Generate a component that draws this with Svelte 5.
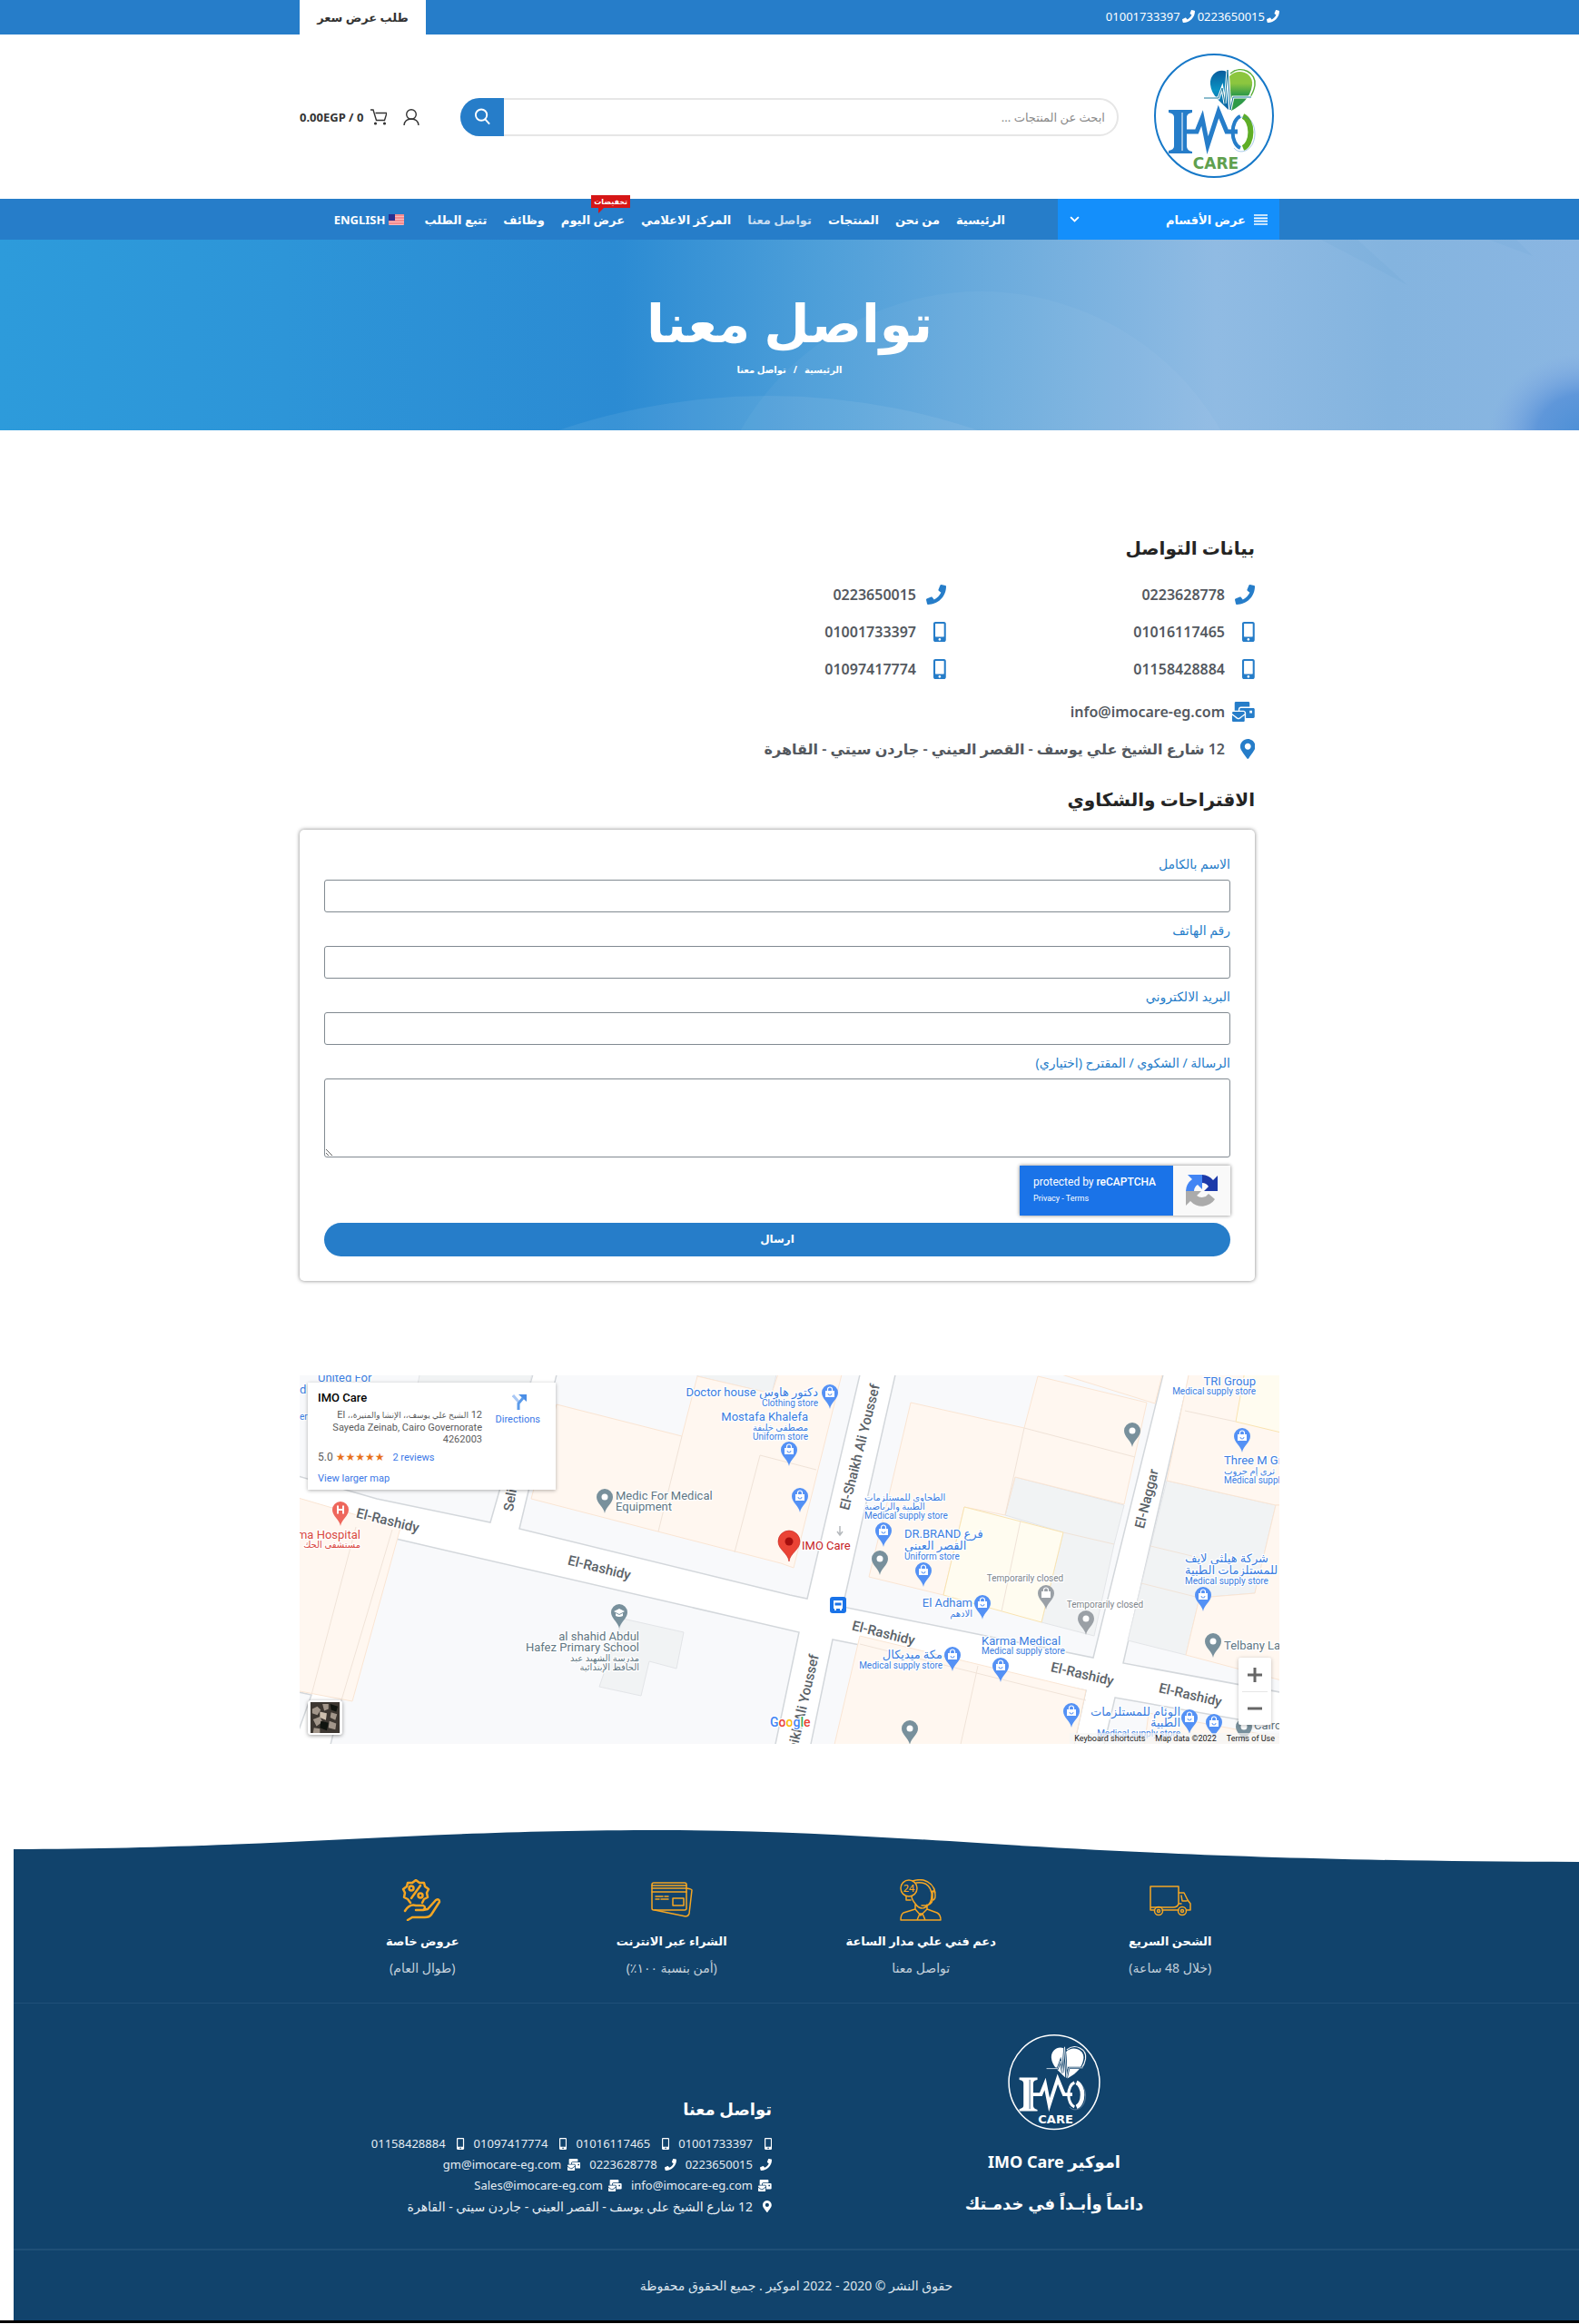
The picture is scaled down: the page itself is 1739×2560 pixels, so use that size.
<script>
  const paths = {
    phone: { w: 512, d: 'M493.4 24.6l-104-24c-11.3-2.6-22.9 3.3-27.5 13.9l-48 112c-4.2 9.8-1.4 21.3 6.9 28l60.6 49.6c-36 76.7-98.9 140.5-177.2 177.2l-49.6-60.6c-6.8-8.3-18.2-11.1-28-6.9l-112 48C3.9 366.5-2 378.1.6 389.4l24 104C27.1 504.2 36.7 512 48 512c256.1 0 464-207.5 464-464 0-11.2-7.7-20.9-18.6-23.4z' },
    mobile: { w: 320, d: 'M272 0H48C21.5 0 0 21.5 0 48v416c0 26.5 21.5 48 48 48h224c26.5 0 48-21.5 48-48V48c0-26.5-21.5-48-48-48zM160 480c-17.7 0-32-14.3-32-32s14.3-32 32-32 32 14.3 32 32-14.3 32-32 32zm112-108c0 6.6-5.4 12-12 12H60c-6.6 0-12-5.4-12-12V60c0-6.6 5.4-12 12-12h200c6.6 0 12 5.4 12 12v312z' },
    pin: { w: 384, d: 'M172.268 501.67C26.97 291.031 0 269.413 0 192 0 85.961 85.961 0 192 0s192 85.961 192 192c0 77.413-26.97 99.031-172.268 309.67-9.535 13.774-29.93 13.773-39.464 0zM192 272c44.183 0 80-35.817 80-80s-35.817-80-80-80-80 35.817-80 80 35.817 80 80 80z' },
    mail: { w: 576, d: 'M160 448c-25.6 0-51.2-22.4-64-32-64-44.8-83.2-60.8-96-70.4V480c0 17.67 14.33 32 32 32h256c17.67 0 32-14.33 32-32V345.6c-12.8 9.6-32 25.6-96 70.4-12.8 9.6-38.4 32-64 32zm128-192H32c-17.67 0-32 14.33-32 32v16c25.6 19.2 22.4 19.2 115.2 86.4 9.6 6.4 28.8 25.6 44.8 25.6s35.2-19.2 44.8-22.4c92.8-67.2 89.6-67.2 115.2-86.4V288c0-17.67-14.33-32-32-32zm256-96H224c-17.67 0-32 14.33-32 32v32h96c33.21 0 60.59 25.42 63.71 57.82l.29-.22V416h192c17.67 0 32-14.33 32-32V192c0-17.67-14.33-32-32-32zm-32 128h-64v-64h64v64zm-352-96c0-35.29 28.71-64 64-64h224V32c0-17.67-14.33-32-32-32H96C78.33 0 64 14.33 64 32v192h96v-32z' }
  };

  const nav = [
    { label: 'الرئيسية' },
    { label: 'من نحن' },
    { label: 'المنتجات' },
    { label: 'تواصل معنا', current: true },
    { label: 'المركز الاعلامي' },
    { label: 'عرض اليوم', badge: 'تخفيضات' },
    { label: 'وظائف' },
    { label: 'تتبع الطلب' }
  ];

  const contacts = [
    ['phone', '0223628778'], ['phone', '0223650015'],
    ['mobile', '01016117465'], ['mobile', '01001733397'],
    ['mobile', '01158428884'], ['mobile', '01097417774']
  ];
  const address = '12 شارع الشيخ علي يوسف - القصر العيني - جاردن سيتي - القاهرة';

  const footerRows = [
    [['mobile', '01001733397'], ['mobile', '01016117465'], ['mobile', '01097417774'], ['mobile', '01158428884']],
    [['phone', '0223650015'], ['phone', '0223628778'], ['mail', 'gm@imocare-eg.com']],
    [['mail', 'info@imocare-eg.com'], ['mail', 'Sales@imocare-eg.com']],
    [['pin', address]]
  ];

  const features = [
    { icon: 'truck', title: 'الشحن السريع', sub: '(خلال 48 ساعة)' },
    { icon: 'support', title: 'دعم فني علي مدار الساعة', sub: 'تواصل معنا' },
    { icon: 'cards', title: 'الشراء عبر الانترنت', sub: '(أمن بنسبة ١٠٠٪)' },
    { icon: 'offer', title: 'عروض خاصة', sub: '(طوال العام)' }
  ];

  const fields = [
    { id: 'name', label: 'الاسم بالكامل', type: 'text' },
    { id: 'phone', label: 'رقم الهاتف', type: 'tel' },
    { id: 'email', label: 'البريد الالكتروني', type: 'email' }
  ];

  const blocks = [
    '-5,-5 258,-5 210,162 85,136 -5,110',
    '284,-5 618,-5 559,246 540,242 242,169',
    '93,177 550,283 523,411 33,411 46,358',
    '-5,348 13,352 -5,402',
    '657,-5 952,-5 874,311 598,255',
    '981,-5 1085,-5 1085,350 907,317',
    '587,291 866,347 852,411 562,411',
    '898,355 1085,388 1085,411 885,411'
  ];
  const greys = [
    '438,-5 438,1 520,20 526,-5', '133,-5 257,-5 240,60 120,60',
    '788,112 908,143 897,186 875,287 817,272 841,173 777,154',
    '955,116 1075,143 1052,240 991,245 976,308 912,292',
    '356,268 423,283 415,323 385,315 376,353 330,343'
  ];
  const shops = [
    '283,32 421,67 438,1 520,20 528,-5 598,-5 544,212 530,207 255,136',
    '673,30 798,58 813,1 933,30 908,142 788,112 777,154 732,145 709,242 627,222 650,128',
    '839,-1 942,31 951,-5',
    '980,-5 1085,-5 1085,143 1075,143 955,116',
    '1075,143 1085,143 1085,337 976,308 991,245 1052,240',
    '617,287 866,347 852,411 588,411',
    '935,372 1085,400 1085,411 930,411',
    '-5,134 111,168 58,359 -5,347'
  ];
  const yellows = ['732,145 841,173 817,272 709,242', '1041,-5 1085,-5 1085,64 1031,51'];
  const seams = 'M421 67L395 172M507 88L479 195M507 88L569 104M798 58L777 154M798 58L920 90M794 160L773 260M747 320L727 411M62 167L13 352M102 170L46 358M975 39L1031 51M937 188L995 202M927 229L991 245M841 173L897 186M617 296L866 358';

  const bagPins = [[539, 82], [584, 19], [551, 133], [643, 171], [687, 215], [752, 251], [1038, 67], [995, 242], [719, 308], [772, 320], [850, 370], [980, 377], [1007, 382]];
  const dotPins = [[336, 134, '#78909c'], [639, 202, '#78909c'], [866, 268, '#9aa0a6'], [917, 61, '#78909c'], [1006, 293, '#78909c'], [672, 389, '#78909c'], [1040, 387, '#78909c']];

  // x, y, text, size, colour, anchor
  const labels = [
    [20, 7, 'United For', 13, 'blue', 'start'],
    [0, 20, 'd', 13, 'blue', 'start'],
    [0, 49, 'er', 10, 'blue', 'start'],
    [67, 180, 'ma Hospital', 13, 'red', 'end'],
    [67, 190, 'مستشفى الحك', 10, 'red', 'end'],
    [348, 137, 'Medic For Medical', 13, 'slate', 'start'],
    [348, 149, 'Equipment', 13, 'slate', 'start'],
    [374, 292, 'al shahid Abdul', 13, 'slate', 'end'],
    [374, 304, 'Hafez Primary School', 13, 'slate', 'end'],
    [374, 315, 'مدرسة الشهيد عبد', 10, 'slate', 'end'],
    [374, 325, 'الحافظ الإبتدائية', 10, 'slate', 'end'],
    [571, 23, 'Doctor house دكتور هاوس', 13, 'blue', 'end'],
    [571, 34, 'Clothing store', 10, 'blue', 'end'],
    [560, 50, 'Mostafa Khalefa', 13, 'blue', 'end'],
    [560, 61, 'مصطفى خليفة', 10, 'blue', 'end'],
    [560, 71, 'Uniform store', 10, 'blue', 'end'],
    [622, 138, 'الطحاوى للمستلزمات', 10, 'blue', 'start'],
    [622, 148, 'الطبية والرياضية', 10, 'blue', 'start'],
    [622, 158, 'Medical supply store', 10, 'blue', 'start'],
    [666, 179, 'DR.BRAND فرع', 13, 'blue', 'start'],
    [666, 192, 'القصر العيني', 13, 'blue', 'start'],
    [666, 203, 'Uniform store', 10, 'blue', 'start'],
    [799, 227, 'Temporarily closed', 10, 'grey', 'middle'],
    [887, 256, 'Temporarily closed', 10, 'grey', 'middle'],
    [741, 255, 'El Adham', 13, 'blue', 'end'],
    [741, 266, 'الادهم', 10, 'blue', 'end'],
    [751, 297, 'Karma Medical', 13, 'blue', 'start'],
    [751, 307, 'Medical supply store', 10, 'blue', 'start'],
    [708, 312, 'مكة ميديكال', 13, 'blue', 'end'],
    [708, 323, 'Medical supply store', 10, 'blue', 'end'],
    [970, 375, 'الوئام للمستلزمات', 13, 'blue', 'end'],
    [970, 387, 'الطبية', 13, 'blue', 'end'],
    [970, 398, 'Medical supply store', 10, 'blue', 'end'],
    [1053, 11, 'TRI Group', 13, 'blue', 'end'],
    [1053, 21, 'Medical supply store', 10, 'blue', 'end'],
    [1018, 98, 'Three M Group', 13, 'blue', 'start'],
    [1018, 109, 'ثرى إم جروب', 10, 'blue', 'start'],
    [1018, 119, 'Medical supply store', 10, 'blue', 'start'],
    [975, 206, 'شركة هيلثى لايف', 13, 'blue', 'start'],
    [975, 219, 'للمستلزمات الطبية', 13, 'blue', 'start'],
    [975, 230, 'Medical supply store', 10, 'blue', 'start'],
    [1018, 302, 'Telbany Lab', 13, 'slate', 'start'],
    [1051, 390, 'Cairo', 13, 'slate', 'start'],
    [553, 192, 'IMO Care', 13, 'crimson', 'start']
  ];
  const streets = [
    [97, 160, 14, 'El-Rashidy'], [330, 212, 14, 'El-Rashidy'], [643, 284, 14, 'El-Rashidy'],
    [862, 329, 13, 'El-Rashidy'], [981, 352, 13, 'El-Rashidy'],
    [617, 79, -76, 'El-Shaikh Ali Youssef'], [551, 377, -77, 'El-Shaikh Ali Youssef'],
    [933, 136, -76, 'El-Naggar'], [233, 131, -80, 'Selim']
  ];
</script>

{#snippet glyph(name)}
  <svg class="glyph" viewBox="0 0 {paths[name].w} 512" aria-hidden="true"><path d={paths[name].d} /></svg>
{/snippet}

{#snippet logo(kind)}
  <svg class="logo {kind}" viewBox="0 0 132 138" role="img" aria-label="IMO Care">
    <defs>
      <linearGradient id="hl-{kind}" x1="0" y1="0" x2="0" y2="1">
        <stop offset="0" class="b1" /><stop offset=".5" class="b2" /><stop offset="1" class="b1" />
      </linearGradient>
      <linearGradient id="hr-{kind}" x1="0" y1="0" x2="0" y2="1">
        <stop offset=".3" class="g1" /><stop offset=".6" class="g2" />
      </linearGradient>
    </defs>
    <ellipse cx="66" cy="68.500" rx="65" ry="67.500" class="ring" />
    <path d="M80 20 C71 16 61 23 62 34 C63 46 73 53 82 62 Z" fill="url(#hl-{kind})" />
    <path d="M83 25 C92 15 110 21 108 35 C106 49 96 57 85 63 Z" fill="url(#hr-{kind})" />
    <path d="M84 22 C96 12 113 21 111 35 C110 41 108 45 105 49" class="heartline" />
    <path d="M55 49 H71 L75 38 L78 55 L81 18 L84 62 L87 48 H107" class="pulse-halo" />
    <path d="M55 49 H71 L75 38 L78 55 L81 18 L84 62 L87 48 H107" class="pulse" />
    <path d="M16 62 H42 V65 Q36 66 36 70 V102 Q36 107 42 108 V110 H16 V107 Q22 106 22 102 V70 Q22 66 16 65 Z" class="mark" />
    <path d="M31 65 V107" class="cut" />
    <path d="M35 86 H47 L53 71 L59 101 L71 64 L80 86 H92" class="beat" />
    <path d="M95 69 A11 18 0 0 0 95 104" class="oleft" />
    <path d="M98 69 A11 18 0 0 1 98 104" class="oright" />
    <path d="M88 75 C95 66 111 68 111 89 C110 108 94 112 88 104" class="orim" />
    <text x="68" y="127" class="care" text-anchor="middle">CARE</text>
  </svg>
{/snippet}

<div class="page" dir="rtl">
  <div class="topbar">
    <div class="wrap">
      <div class="tel">
        <a href="tel:0223650015">{@render glyph('phone')}<span>0223650015</span></a>
        <a href="tel:01001733397">{@render glyph('phone')}<span>01001733397</span></a>
      </div>
      <a class="quote" href="#quote">طلب عرض سعر</a>
    </div>
  </div>

  <header class="wrap head">
    <a class="brand" href="#home">{@render logo('color')}</a>
    <form class="search" onsubmit={(e) => e.preventDefault()}>
      <input type="search" placeholder="ابحث عن المنتجات ..." aria-label="ابحث عن المنتجات" />
      <button aria-label="بحث">
        <svg viewBox="0 0 20 20"><circle cx="8.500" cy="8" r="6.500" /><path d="M13 13l5 5.500" /></svg>
      </button>
    </form>
    <div class="tools">
      <a href="#account" aria-label="حسابي">
        <svg viewBox="0 0 18 18"><circle cx="9" cy="6" r="5.300" /><path d="M1 18C1.500 13.500 4.500 11 9 11s7.500 2.500 8 7" /></svg>
      </a>
      <a class="cart" href="#cart">
        <svg viewBox="0 0 18 18"><path d="M0 1h3l3.500 11.500h9L18 4.500H5.500" /><circle class="dot" cx="5.500" cy="16" r="1.600" /><circle class="dot" cx="15.500" cy="16" r="1.600" /></svg>
        <span dir="ltr">0.00EGP / 0</span>
      </a>
    </div>
  </header>

  <div class="navbar">
    <div class="wrap">
      <button class="cats">
        <svg class="bars" viewBox="0 0 15 12"><path d="M0 1h15M0 4.300h15M0 7.600h15M0 11h15" /></svg>
        <span>عرض الأقسام</span>
        <svg class="chev" viewBox="0 0 10 6"><path d="M1 1l4 4 4-4" /></svg>
      </button>
      <nav>
        {#each nav as item}
          <a href="#nav" class:current={item.current}>{item.label}{#if item.badge}<em>{item.badge}</em>{/if}</a>
        {/each}
        <a class="lang" href="#en">
          <svg viewBox="0 0 17 12"><rect width="17" height="12" rx="1" fill="#fbb9bb" /><path d="M0 1h17M0 4h17M0 7h17M0 10h17" stroke="#f47c80" stroke-width="1.400" /><rect width="7" height="7" fill="#2b2f8f" /></svg>
          <span>ENGLISH</span>
        </a>
      </nav>
    </div>
  </div>

  <section class="hero">
    <svg class="shapes" viewBox="0 0 1739 210" preserveAspectRatio="none" aria-hidden="true">
      <defs><radialGradient id="blob"><stop offset="0" stop-color="#4b8fd6" /><stop offset=".5" stop-color="#5f97da" /><stop offset="1" stop-color="#7fa8e2" stop-opacity="0" /></radialGradient></defs>
      <circle cx="1080" cy="362" r="305" fill="#fff" opacity=".04" />
      <circle cx="846" cy="893" r="721" fill="#fff" opacity=".07" />
      <path d="M1455 0h40l55 50zM1640 0h30l18 18z" fill="#4d96d0" opacity=".08" />
      <ellipse cx="1745" cy="215" rx="105" ry="90" fill="url(#blob)" />
    </svg>
    <h1>تواصل معنا</h1>
    <div class="crumbs"><a href="#home">الرئيسية</a><span>/</span><span>تواصل معنا</span></div>
  </section>

  <main class="wrap">
    <div class="content">
      <h2>بيانات التواصل</h2>
      <ul class="contacts">
        {#each contacts as [icon, text]}
          <li><i>{@render glyph(icon)}</i><span>{text}</span></li>
        {/each}
      </ul>
      <ul class="contacts wide">
        <li><i>{@render glyph('mail')}</i><span>info@imocare-eg.com</span></li>
        <li><i>{@render glyph('pin')}</i><span>{address}</span></li>
      </ul>
      <h2 class="second">الاقتراحات والشكاوي</h2>
      <form class="card" onsubmit={(e) => e.preventDefault()}>
        {#each fields as f}
          <label for={f.id}>{f.label}</label>
          <input id={f.id} type={f.type} />
        {/each}
        <label for="msg">الرسالة / الشكوي / المقترح (اختياري)</label>
        <textarea id="msg"></textarea>
        <div class="captcha" dir="ltr">
          <div class="cap-text">
            <div>protected by <b>reCAPTCHA</b></div>
            <small><a href="#privacy">Privacy</a> - <a href="#terms">Terms</a></small>
          </div>
          <div class="cap-logo">
            <svg viewBox="0 0 40 40">
              <path d="M37 20V3l-5 5A17 17 0 0 0 20 2v9a9 9 0 0 1 7 4l-5 5z" fill="#1c3aa9" />
              <path d="M20 2H4l5 5A17 17 0 0 0 2 20h9a9 9 0 0 1 4-7l5 5z" fill="#4285f4" />
              <path d="M2 20v16l5-5a17 17 0 0 0 27-2l-7-6a9 9 0 0 1-13 2l5-5z" fill="#ababab" />
            </svg>
          </div>
        </div>
        <button class="send">ارسال</button>
      </form>
    </div>

    <div class="map" dir="ltr">
      <svg class="plan" viewBox="0 0 1079 406" role="img" aria-label="IMO Care map">
        <defs>
          <path id="drop" d="M0 18C-1 11-9 7-9 0a9 9 0 0 1 18 0C9 7 1 11 0 18z" />
          <g id="bag"><path d="M-5-2H5V5H-5z" fill="#fff" /><path d="M-2.500-2v-1.500a2.500 2.500 0 0 1 5 0V-2" fill="none" stroke="#fff" stroke-width="1.200" /></g>
        </defs>
        <rect width="1079" height="406" fill="#fff" />
        {#each blocks as p}<polygon points={p} class="block" />{/each}
        {#each greys as p}<polygon points={p} class="greyb" />{/each}
        {#each shops as p}<polygon points={p} class="shop" />{/each}
        {#each yellows as p}<polygon points={p} class="yellow" />{/each}
        <path d={seams} class="seam" />
        <path d="M595 166v9m-3-3l3 4 3-4" class="arrow" />
        {#each streets as [x, y, a, t]}
          <text class="street" text-anchor="middle" transform="translate({x} {y}) rotate({a})" dy="5">{t}</text>
        {/each}
        {#each labels as [x, y, t, s, c, a]}
          <text {x} {y} class="lbl {c} {a} s{s}">{t}</text>
        {/each}
        {#each dotPins as [x, y, c]}
          <g transform="translate({x} {y})"><use href="#drop" fill={c} /><circle r="3.500" fill="#fff" /></g>
        {/each}
        {#each bagPins as [x, y]}
          <g transform="translate({x} {y})"><use href="#drop" fill="#5491f5" /><use href="#bag" /><path d="M-2 1a2 2 0 0 0 4 0" fill="none" stroke="#5491f5" /></g>
        {/each}
        <g transform="translate(822 240)"><use href="#drop" fill="#9aa0a6" /><use href="#bag" /></g>
        <g transform="translate(352 261)"><use href="#drop" fill="#78909c" /><path d="M-6-1L0-4 6-1 0 2zM-4 1v3q4 2 8 0V1L0 3z" fill="#fff" /></g>
        <g transform="translate(45 148)"><use href="#drop" fill="#ee675c" /><path d="M-3-4.500V4.500M3-4.500V4.500M-3 0H3" stroke="#fff" stroke-width="2" /></g>
        <g transform="translate(539 183)"><path d="M0 22C-1 13-12 9-12 0a12 12 0 0 1 24 0C12 9 1 13 0 22z" fill="#ea4335" stroke="#c5221f" stroke-width=".6" /><circle r="4.500" fill="#a50e0e" /></g>
        <g transform="translate(593 253)"><rect x="-9" y="-9" width="18" height="18" rx="3" fill="#1a73e8" /><path d="M-5-5H5V4H-5zM-4 4h2v2h-2zM2 4h2v2H2z" fill="#fff" /><path d="M-3.500-2.500h7v3h-7z" fill="#1a73e8" /></g>
        <text x="518" y="387" class="google"><tspan fill="#4285f4">G</tspan><tspan fill="#ea4335">o</tspan><tspan fill="#fbbc04">o</tspan><tspan fill="#4285f4">g</tspan><tspan fill="#34a853">l</tspan><tspan fill="#ea4335">e</tspan></text>
      </svg>
      <div class="place">
        <div class="place-main">
          <strong>IMO Care</strong>
          <p dir="rtl">12 <span>الشيخ علي يوسف،، الإنشا والمنيرة،،</span> El Sayeda Zeinab, Cairo Governorate 4262003</p>
          <div class="rate">5.0 <span>★★★★★</span> <a href="#reviews">2 reviews</a></div>
          <a href="#larger">View larger map</a>
        </div>
        <a class="dir" href="#directions">
          <svg viewBox="0 0 16 18"><path d="M1 2l6 7" stroke="#a9c8f5" stroke-width="3" fill="none" /><path d="M7 18v-7l5-6" stroke="#5b9bea" stroke-width="3" fill="none" /><path d="M7 1h9v8z" fill="#4a8ee6" /></svg>
          Directions
        </a>
      </div>
      <button class="sat" aria-label="Satellite">
        <svg viewBox="0 0 34 36"><rect width="34" height="36" fill="#3d3731" /><path d="M2 8l6-3 4 4-4 6-6-2zM14 2l7 0 0 6-5 2zM3 20l8-3 3 6-7 5zM24 12l7 2-2 7-6-3zM22 22l8 3-1 7-8-2zM4 30l7 1v5H3z" fill="#a2968a" /><path d="M11 11l8 2-1 8-7-3z" fill="#cdbfae" /><path d="M12 22l9 2-2 9-8-3zM23 2l9 3-2 6-6-2z" fill="#10140f" /></svg>
      </button>
      <div class="zoom"><button aria-label="Zoom in"><svg viewBox="0 0 16 16"><path d="M0 8h16M8 0v16" /></svg></button><button aria-label="Zoom out"><svg viewBox="0 0 16 16"><path d="M0 8h16" /></svg></button></div>
      <div class="legal"><span>Keyboard shortcuts</span><span>Map data ©2022</span><a href="#tou">Terms of Use</a></div>
    </div>
  </main>

  <footer>
    <svg class="wave" viewBox="0 0 1724 36" preserveAspectRatio="none" aria-hidden="true"><path d="M0 21C300 20 430 0 715 0S1150 34 1724 35V36H0z" /></svg>
    <div class="inner features">
      {#each features as f}
        <div class="feature">
          <svg viewBox="0 0 46 46" aria-hidden="true">
            {#if f.icon === 'truck'}
              <path d="M5 34H1V8h31v19q-1 4-6 4M1 31h26M32 15h6l4 8 3 4v7h-4M14 34h18M35 18l1 6h5M32 27h3" />
              <circle cx="10" cy="35" r="4.500" /><circle cx="10" cy="35" r="1.500" /><circle cx="36" cy="35" r="4.500" /><circle cx="36" cy="35" r="1.500" />
            {:else if f.icon === 'support'}
              <circle cx="10" cy="10" r="9" /><text x="10" y="14" text-anchor="middle">24</text>
              <path d="M14 2q6-2 12-1 11 3 13 14M18 4q14-2 17 11M36 13q3 0 3 5t-3 5zM35 15q1 12-7 16-6 3-11-4-4-5-4-8M7 19v4h5M36 23q-1 6-9 6h-3M17 28v5L4 37q-3 2-3 8h44q0-6-4-8l-11-4v-5M17 33l6 7 7-7M19 45l3-7h3l3 7" />
            {:else if f.icon === 'cards'}
              <rect x="1" y="4" width="38" height="30" rx="2" /><path d="M1 7h38M1 14h38M1 10h38M5 19h8M15 19h4M5 22h4M11 22h8M24 21h12v8H24zM4 34l34 7q3 0 4-3l3-26q0-1-6-2" />
            {:else}
              <g class="bold"><path d="M10 26L7 22L3 20L4 15L2 11L6 8L7 4L12 4L16 1L20 4L25 4L26 8L30 11L28 15L29 20L25 22L23 26M11 21L21 7M4 35q5-8 12-6h8q4 2 0 5h-8M24 34l5-1 9-10q4-2 4 2l-9 14q-2 3-7 3H12L7 45" /><circle cx="11" cy="10" r="2.500" /><circle cx="21" cy="18" r="2.500" /></g>
            {/if}
          </svg>
          <h3>{f.title}</h3>
          <p>{f.sub}</p>
        </div>
      {/each}
    </div>
    <div class="rule">
      <div class="inner about">
        <div class="who">
          {@render logo('mono')}
          <h4>اموكير IMO Care</h4>
          <h4>دائماً وأبـداً في خدمـتك</h4>
        </div>
        <div class="reach">
          <h4>تواصل معنا</h4>
          {#each footerRows as row}
            <div class="line">
              {#each row as [icon, text]}
                <span class="item" class:long={icon === 'pin'}><i>{@render glyph(icon)}</i><span>{text}</span></span>
              {/each}
            </div>
          {/each}
        </div>
      </div>
    </div>
    <div class="copy">حقوق النشر © 2020 - 2022 اموكير . جميع الحقوق محفوظة</div>
  </footer>
  <div class="base"></div>
</div>

<style>
  :global(body) { margin: 0; background: #fff; }
  .page { font-family: "Noto Sans", "DejaVu Sans", sans-serif; color: #333; font-size: 13px; line-height: 20px; overflow: hidden; }
  .page :global(*) { box-sizing: border-box; }
  a { color: inherit; text-decoration: none; }
  h1, h2, h3, h4, p, ul { margin: 0; padding: 0; }
  button { font: inherit; border: 0; padding: 0; cursor: pointer; }
  i { font-style: normal; display: flex; }
  .wrap { max-width: 1079px; margin: 0 auto; }
  .glyph { fill: currentColor; display: block; height: 100%; }

  .topbar { background: #267dc9; color: #fff; }
  .topbar .wrap { display: flex; justify-content: space-between; align-items: center; height: 38px; }
  .tel { display: flex; gap: 3px; line-height: 18px; padding-bottom: 2px; }
  .tel a { display: flex; align-items: center; gap: 2px; }
  .tel .glyph { height: 14px; }
  .quote { background: #fff; color: #333; font-weight: 700; font-size: 13px; width: 139px; text-align: center; line-height: 38px; }

  .head { display: flex; align-items: center; height: 181px; }
  .brand { margin: 0 6px 2px 39px; }
  .logo { display: block; width: 132px; height: 138px; }
  .logo .ring { fill: none; stroke: #1678c8; stroke-width: 2; }
  .logo .b1 { stop-color: #0a5c9c; }
  .logo .b2 { stop-color: #0b93c4; }
  .logo .g1 { stop-color: #8cc63f; }
  .logo .g2 { stop-color: #2f9a48; }
  .logo .heartline { fill: none; stroke: #5cb03c; stroke-width: 1.500; }
  .logo .pulse-halo { fill: none; stroke: #fff; stroke-width: 3; }
  .logo .pulse { fill: none; stroke: #1a7a9c; stroke-width: 1; }
  .logo .mark { fill: #267dc9; }
  .logo .cut { stroke: #fff; stroke-width: 1; }
  .logo .beat { fill: none; stroke: #267dc9; stroke-width: 5; }
  .logo .oleft { fill: none; stroke: #267dc9; stroke-width: 4; }
  .logo .oright { fill: none; stroke: #5fae26; stroke-width: 6; }
  .logo .orim { fill: none; stroke: #267dc9; stroke-width: 1; opacity: .4; }
  .logo .care { font: 700 17px "DejaVu Sans", sans-serif; fill: #5fa04e; }
  .logo.mono { width: 102px; height: 106px; }
  .logo.mono stop { stop-color: #fff; }
  .logo.mono .ring, .logo.mono .heartline, .logo.mono .beat, .logo.mono .oleft, .logo.mono .oright, .logo.mono .orim { stroke: #fff; }
  .logo.mono .pulse-halo, .logo.mono .cut { stroke: #11436c; }
  .logo.mono .pulse { stroke: #fff; }
  .logo.mono .mark, .logo.mono .care { fill: #fff; }

  .search { flex: 1; display: flex; height: 42px; border: 2px solid #e6e6e6; border-radius: 21px; }
  .search input { flex: 1; border: 0; outline: 0; background: none; font: inherit; font-size: 13px; padding: 0 13px; color: #555; }
  .search input::placeholder { color: #8a8a8a; opacity: 1; }
  .search button { width: 48px; margin: -2px 0 -2px -2px; background: #267dc9; border-radius: 21px 0 0 21px; display: grid; place-items: center; }
  .search svg { width: 19px; fill: none; stroke: #fff; stroke-width: 2; }
  .tools { display: flex; align-items: center; gap: 18px; margin-right: 45px; font-weight: 700; font-size: 13px; }
  .tools a { display: flex; align-items: center; gap: 8px; }
  .tools svg { width: 18px; height: 18px; fill: none; stroke: #333; stroke-width: 1.400; }
  .tools .dot { fill: #333; stroke: none; }

  .navbar { background: #267dc9; color: #fff; font-weight: 700; font-size: 13px; }
  .navbar .wrap { display: flex; align-items: stretch; height: 45px; }
  .cats { width: 244px; background: #148ffb; color: #fff; font-weight: 700; display: flex; align-items: center; padding: 0 13px; gap: 9px; }
  .bars { width: 15px; stroke: #fff; stroke-width: 1.700; }
  .chev { width: 11px; margin-right: auto; fill: none; stroke: #fff; stroke-width: 1.700; }
  nav { display: flex; align-items: center; gap: 18px; margin-right: 58px; white-space: nowrap; }
  nav a { position: relative; }
  nav .current { color: #c8def1; }
  nav em { position: absolute; right: -6px; top: -17px; background: #d61616; font-style: normal; font-size: 8px; line-height: 14px; padding: 0 3px; }
  nav em::after { content: ""; position: absolute; left: 8px; top: 14px; border: 3px solid transparent; border-top-color: #d61616; border-left-color: #d61616; }
  .lang { display: flex; align-items: center; gap: 4px; margin-right: 4px; }
  .lang svg { width: 17px; }

  .hero { position: relative; background: linear-gradient(90deg, #2d9bdb 0, #2d95d8 18%, #2b8bd3 39%, #4e9fd9 52%, #74afde 66%, #90bbe3 77%, #84b4df 88%, #8ab6e2 100%); color: #fff; text-align: center; padding: 49px 0 56px; }
  .shapes { position: absolute; inset: 0; width: 100%; height: 100%; }
  h1 { position: relative; font-size: 58px; line-height: 84px; font-weight: 700; }
  .crumbs { position: relative; display: flex; justify-content: center; gap: 8px; font-size: 10px; font-weight: 700; line-height: 21px; }

  .content { padding: 116px 27px 0 0; }
  h2 { font-size: 20px; line-height: 28px; font-weight: 700; color: #242424; }
  .contacts { list-style: none; display: grid; grid-template-columns: 340px 1fr; margin-top: 16px; color: #54595f; font-size: 16px; font-weight: 600; }
  .contacts li { display: flex; align-items: center; gap: 8px; height: 41px; }
  .contacts i { width: 25px; height: 22px; color: #267dc9; }
  .contacts.wide { grid-template-columns: 1fr; margin-top: 6px; }
  h2.second { margin: 22px 0 19px; }
  .card { display: flex; flex-direction: column; padding: 28px 27px 27px; border-radius: 5px; box-shadow: 0 0 4px rgba(0, 0, 0, .5); }
  label { color: #267dc9; font-size: 14px; line-height: 20px; margin-bottom: 7px; align-self: flex-start; }
  .card input, .card textarea { border: 1px solid #818a91; border-radius: 3px; background: #fff; font: inherit; width: 100%; height: 36px; margin: 0 0 10px; padding: 4px 12px; }
  .card textarea { height: 87px; margin-bottom: 9px; resize: vertical; display: block; }
  .captcha { display: flex; width: 232px; height: 55px; box-shadow: 0 0 4px #808080; font-family: Roboto, sans-serif; color: #fff; }
  .cap-text { flex: 1; background: #1a73e8; padding: 9px 0 0 15px; font-size: 12px; line-height: 18px; text-align: left; }
  .cap-text b { font-weight: 500; }
  .cap-text small { font-size: 9px; display: block; }
  .cap-logo { width: 63px; background: #f9f9f9; display: grid; place-items: center; }
  .cap-logo svg { width: 40px; }
  .send { margin-top: 8px; height: 37px; border-radius: 19px; background: #267dc9; color: #fff; font-weight: 700; font-size: 12px; line-height: 16px; padding-bottom: 2px; }

  .map { position: relative; margin: 104px 0 95px; overflow: hidden; font-family: Roboto, "DejaVu Sans", sans-serif; }
  .plan { display: block; width: 100%; }
  .block { fill: #f8f9fb; stroke: #d3d7db; stroke-width: 1.500; }
  .greyb { fill: #f1f3f4; stroke: #e3e5e8; }
  .shop { fill: #fff7f0; stroke: #fae5d3; }
  .yellow { fill: #fffcf0; stroke: #f9e3b0; }
  .seam { fill: none; stroke: #f0e3d8; }
  .arrow { fill: none; stroke: #b5b9bd; stroke-width: 1.500; }
  .plan text { stroke: #fff; stroke-width: 2.500; paint-order: stroke; stroke-linejoin: round; }
  .street { font-size: 15px; font-weight: 500; fill: #5b6268; }
  .s13 { font-size: 13px; }
  .s10 { font-size: 10px; }
  .start { text-anchor: start; }
  .middle { text-anchor: middle; }
  .end { text-anchor: end; }
  .blue { fill: #3b7de0; }
  .red { fill: #d9473d; }
  .crimson { fill: #c5221f; }
  .slate { fill: #5f7682; }
  .grey { fill: #80868b; }
  .google { font-size: 14px; font-weight: 500; }
  .place { position: absolute; left: 9px; top: 8px; width: 273px; height: 118px; background: #fff; box-shadow: 0 1px 4px rgba(0, 0, 0, .3); padding: 8px 11px; display: flex; color: #5b5b5b; font-size: 11px; line-height: 13px; }
  .place-main { width: 181px; display: flex; flex-direction: column; align-items: flex-start; white-space: nowrap; }
  .place strong { font-size: 13px; line-height: 18px; font-weight: 500; color: #000; }
  .place p { text-align: right; white-space: normal; margin: 3px 0 6px; padding-left: 10px; width: 181px; }
  .place p span { font-size: 9px; }
  .place a { color: #3a78e7; }
  .rate { font-size: 12px; line-height: 14px; margin-bottom: 9px; }
  .rate span { color: #e7711b; font-size: 12px; line-height: 14px; }
  .rate a { font-size: 11px; margin-left: 6px; }
  .dir { flex: 1; text-align: right; padding: 4px 6px 0 0; }
  .dir svg { display: block; width: 16px; margin: 0 15px 4px auto; }
  .sat { position: absolute; left: 9px; bottom: 10px; width: 38px; height: 38px; background: #fff; padding: 2px; border-radius: 3px; box-shadow: 0 1px 4px rgba(0, 0, 0, .4); }
  .sat svg { display: block; width: 34px; height: 34px; }
  .zoom { position: absolute; right: 9px; bottom: 21px; width: 36px; background: #fff; border-radius: 2px; box-shadow: 0 1px 4px rgba(0, 0, 0, .25); padding: 0 4px; }
  .zoom button { display: grid; place-items: center; width: 100%; height: 37px; background: none; }
  .zoom button + button { border-top: 1px solid #e6e6e6; }
  .zoom svg { width: 16px; stroke: #666; stroke-width: 3; }
  .legal { position: absolute; right: 0; bottom: 0; display: flex; gap: 11px; background: rgba(245, 245, 245, .7); font-size: 9px; line-height: 12px; padding: 0 5px; color: #222; }

  footer { margin-left: 15px; color: #fff; background: #11436c; }
  .wave { display: block; width: 100%; height: 36px; background: #fff; fill: #11436c; }
  .inner { max-width: 1098px; margin: 0 auto; }
  .features { display: grid; grid-template-columns: repeat(4, 1fr); padding: 18px 0 26px; text-align: center; }
  .feature svg { display: block; width: 46px; height: 46px; margin: 0 auto 10px; fill: none; stroke: #f5a623; stroke-width: 1.500; stroke-linejoin: round; stroke-linecap: round; }
  .feature svg text { fill: #f5a623; stroke: none; font-size: 11px; font-weight: 500; }
  .feature .bold { stroke-width: 2.500; }
  .feature h3 { font-size: 13px; line-height: 24px; font-weight: 700; }
  .feature p { font-size: 14px; line-height: 24px; margin-top: 6px; color: #c3d0db; }
  .rule { border-top: 1px solid #1f5079; border-bottom: 2px solid #1f4f77; }
  .about { display: grid; grid-template-columns: 1fr 1fr; gap: 50px; align-items: end; padding: 34px 4px 35px 0; }
  .who { display: flex; flex-direction: column; align-items: center; padding-bottom: 3px; }
  h4 { font-size: 18px; line-height: 24px; font-weight: 700; }
  .who h4 { margin-top: 22px; }
  .reach h4 { margin-bottom: 15px; }
  .line { display: flex; gap: 10px; height: 23px; font-size: 13px; line-height: 23px; color: #e6edf3; white-space: nowrap; }
  .long { font-size: 14px; }
  .item { display: flex; align-items: center; gap: 5px; }
  .item i { width: 16px; height: 13px; color: #fff; }
  .copy { text-align: center; line-height: 77px; font-size: 14px; color: #dde6ee; }
  .base { height: 3px; background: #000; }
</style>
